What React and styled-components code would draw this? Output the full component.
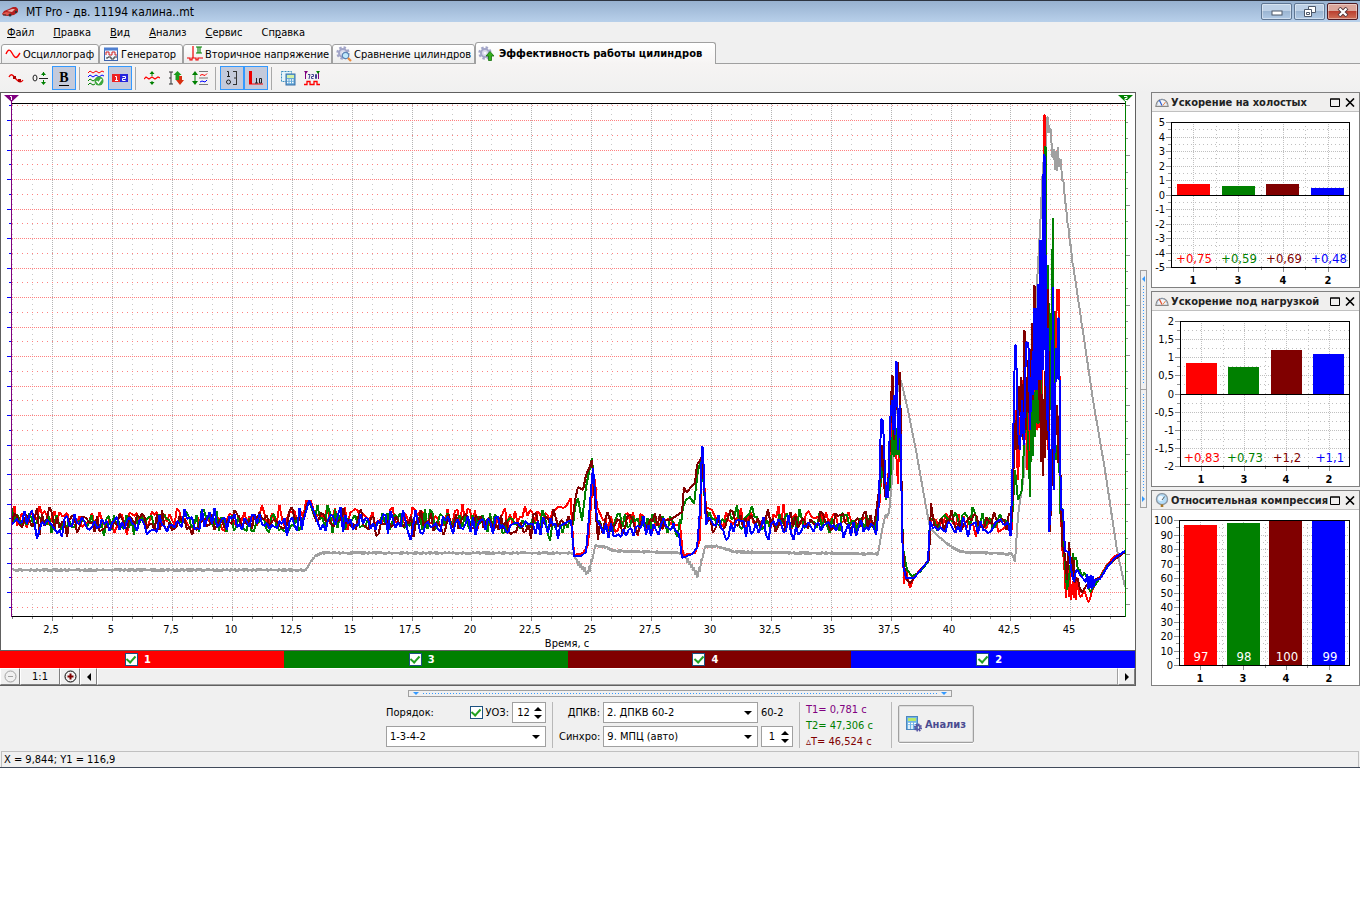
import React, { useState } from 'react';
import styled, { createGlobalStyle, css } from 'styled-components';

const GlobalStyle = createGlobalStyle`
  * {
    box-sizing: border-box;
  }
  body {
    margin: 0;
    background: #fff;
  }
  body, button, input, select {
    font-family: 'DejaVu Sans Condensed', 'DejaVu Sans', sans-serif;
    font-size: 11px;
    color: #000;
  }
`;

const RED = '#ff0000';
const GREEN = '#008000';
const MAROON = '#800000';
const BLUE = '#0000ff';
const GRAY = '#a0a0a0';

const Window = styled.div`
  background: #f0f0f0;
  border-top: 1px solid #2d3440;
  border-bottom: 1px solid #404a5a;
`;

const TitleBar = styled.header`
  display: flex;
  align-items: center;
  height: 21px;
  padding: 0 2px;
  background: linear-gradient(#97b1d0, #b8d0ea);

  h1 {
    flex: 1;
    margin: 0 0 0 8px;
    font-size: 12px;
    font-weight: 400;
  }
`;

const WindowButtons = styled.div`
  display: flex;
  gap: 2px;
`;

const WindowButton = styled.button`
  display: flex;
  align-items: center;
  justify-content: center;
  width: 31px;
  height: 17px;
  padding: 0;
  border: 1px solid ${(p) => (p.$close ? '#4e1a22' : '#5f7693')};
  border-radius: 2px;
  box-shadow: inset 0 0 0 1px rgba(255, 255, 255, 0.4);
  background: ${(p) =>
    p.$close
      ? 'linear-gradient(#dba79c 0 45%, #bb4030 50%, #cf7058)'
      : 'linear-gradient(#bdd0e6 0 45%, #9bb5d2 50%, #b1cae6)'};
`;

const MenuBar = styled.nav`
  display: flex;
  gap: 19px;
  align-items: center;
  height: 20px;
  padding: 0 7px;

  a {
    color: #000;
    text-decoration: none;
  }
`;

const Tabs = styled.div`
  display: flex;
  align-items: flex-end;
  height: 22px;
  padding-left: 1px;
  box-shadow: inset 0 -1px #a0a0a0;
`;

const Tab = styled.button`
  display: flex;
  align-items: center;
  gap: 2px;
  flex: 0 0 ${(p) => p.$width}px;
  height: 20px;
  padding: 0 3px;
  overflow: hidden;
  white-space: nowrap;
  border: 1px solid #a0a0a0;
  border-radius: 3px 3px 0 0;
  background: linear-gradient(#fff, #ececec);

  svg {
    flex-shrink: 0;
  }
  ${(p) =>
    p.$active &&
    css`
      height: 22px;
      gap: 5px;
      padding: 0 2px;
      font-weight: 700;
      border-bottom: 0;
      background: linear-gradient(#fff, #f6f4f3);
    `}
`;

const Toolbar = styled.div`
  display: flex;
  align-items: center;
  height: 28px;
  padding-left: 4px;
  background: linear-gradient(#f6f4f3, #f0f0f0);
`;

const ToolButton = styled.button`
  display: flex;
  align-items: center;
  justify-content: center;
  width: 24px;
  height: 24px;
  padding: 0;
  border: 1px solid ${(p) => (p.$on ? '#3399ff' : 'transparent')};
  background: ${(p) => (p.$on ? '#c4cadb' : 'none')};
`;

const ToolSeparator = styled.span`
  width: 1px;
  height: 23px;
  margin: 0 4px 0 3px;
  background: #a8a8a8;
`;

const Main = styled.main`
  display: grid;
  grid-template-columns: minmax(0, 1fr) 15px 209px;
`;

const Scope = styled.section`
  border: 1px solid #606060;
  border-width: 1px 1px 1px 0;
`;

const Plot = styled.svg`
  display: block;
  width: 100%;
  height: auto;
  background: #fff;
  border-left: ${(p) => (p.$edge ? '1px solid #606060' : '0')};
`;

const Channels = styled.div`
  display: flex;
  border-top: 1px solid #606060;
`;

const Channel = styled.label`
  display: flex;
  flex: 1;
  align-items: center;
  justify-content: center;
  gap: 6px;
  height: 17px;
  padding-right: 8px;
  color: #fff;
  font-weight: 700;
  background: ${(p) => p.$color};
`;

const CheckBox = styled.input.attrs({ type: 'checkbox' })`
  appearance: none;
  display: grid;
  place-items: center;
  width: 13px;
  height: 13px;
  margin: 0;
  border: 1px solid #1c5180;
  background: #fff;

  &:checked::after {
    content: '';
    width: 4px;
    height: 7px;
    margin-top: -2px;
    border: solid #21a121;
    border-width: 0 2px 2px 0;
    transform: rotate(42deg);
  }
`;

const ScrollRow = styled.div`
  display: flex;
  height: 17px;
  background: #f0f0f0;
`;

const FlatButton = styled.button`
  display: flex;
  align-items: center;
  justify-content: center;
  width: ${(p) => p.$width}px;
  padding: 0;
  border: 1px solid;
  border-color: #fff #808080 #808080 #fff;
  background: #f0f0f0;
`;

const Track = styled.div`
  flex: 1;
  border: 1px solid;
  border-color: #fff #a0a0a0 #a0a0a0 #fff;
`;

const VSplit = styled.div`
  display: flex;
  align-items: center;
  justify-content: center;
`;

const VGrip = styled.div`
  display: flex;
  flex-direction: column;
  align-items: center;
  width: 7px;
  height: 40%;
  padding: 5px 0;
  border: 1px solid #a0a0a0;

  span {
    flex: 1;
    width: 1px;
    margin: 4px 0;
    background: repeating-linear-gradient(#3399ff 0 1px, transparent 1px 3px);
  }
  i {
    width: 5px;
    height: 1px;
    background: #a0a0a0;
  }
`;

const HSplit = styled.div`
  display: flex;
  justify-content: center;
  padding: 4px 0;
`;

const HGrip = styled.div`
  display: flex;
  align-items: center;
  width: 40%;
  height: 7px;
  padding: 0 4px;
  border: 1px solid #a0a0a0;

  span {
    flex: 1;
    height: 1px;
    margin: 0 4px;
    background: repeating-linear-gradient(90deg, #3399ff 0 1px, transparent 1px 3px);
  }
`;

const Side = styled.aside`
  display: flex;
  flex-direction: column;
  gap: 3px;
`;

const Card = styled.section`
  border: 1px solid #808080;
  background: #fff;
`;

const CardHead = styled.div`
  display: flex;
  align-items: center;
  height: 19px;
  padding: 0 4px 0 3px;
  gap: 2px;
  background: #f0efee;
  border-bottom: 1px solid #c0c0c0;

  h2 {
    flex: 1;
    margin: 0;
    overflow: hidden;
    white-space: nowrap;
    font-size: 11px;
    font-weight: 700;
    color: #222;
  }
  button {
    display: flex;
    padding: 0;
    border: 0;
    background: none;
  }
  button + button {
    margin-left: 3px;
  }
`;

const Controls = styled.form`
  display: flex;
  justify-content: center;
  height: 49px;
  padding-top: 1px;
`;

const Group = styled.div`
  display: flex;
  flex-direction: column;
  gap: 3px;
  width: ${(p) => p.$width}px;
`;

const Row = styled.div`
  display: flex;
  align-items: center;
  gap: 3px;
  height: 21px;
  white-space: nowrap;
`;

const RowLabel = styled.label`
  flex: ${(p) => (p.$fixed ? '0 0 41px' : '1')};
  text-align: ${(p) => (p.$fixed ? 'right' : 'left')};
`;

const Divider = styled.span`
  width: 1px;
  height: 46px;
  margin: 0 6px;
  background: #b8b8b8;
`;

const SelectBox = styled.span`
  position: relative;
  flex: 0 0 ${(p) => p.$width}px;

  select {
    appearance: none;
    display: block;
    width: 100%;
    height: 21px;
    padding: 0 3px;
    border: 1px solid #a0a0a0;
    border-radius: 0;
    background: #fff;
  }
  svg {
    position: absolute;
    top: 9px;
    right: 6px;
    pointer-events: none;
  }
`;

const Spin = styled.span`
  display: flex;
  align-items: center;
  width: ${(p) => p.$width}px;
  height: 21px;
  padding-right: 3px;
  border: 1px solid #a0a0a0;
  background: #fff;

  input {
    flex: 1;
    min-width: 0;
    padding: 0;
    border: 0;
    text-align: center;
    outline: 0;
  }
  div {
    display: flex;
    flex-direction: column;
    gap: 4px;
  }
  button {
    display: flex;
    padding: 0;
    border: 0;
    background: none;
  }
`;

const Times = styled.div`
  display: flex;
  flex-direction: column;
  width: 79px;
  line-height: 16px;
  white-space: nowrap;
`;

const Time = styled.span`
  color: ${(p) => p.$color};
`;

const AnalyzeButton = styled.button`
  display: flex;
  align-items: center;
  justify-content: center;
  gap: 3px;
  width: 76px;
  height: 38px;
  margin-top: 3px;
  padding: 0;
  border: 1px solid #a0a0a0;
  border-radius: 2px;
  box-shadow: inset 0 0 0 1px #dcdcdc, 0 1px #fff;
  background: #f0f0f0;
  color: #4b4b91;
  font-weight: 700;
`;

const StatusBar = styled.footer`
  height: 16px;
  margin: 1px 1px 0;
  padding-left: 2px;
  line-height: 15px;
  border: 1px solid #c0c0c0;
  border-bottom: 0;
`;

/* ---------- icons ---------- */

const Icon = ({ children, size = 16 }) => (
  <svg width={size} height={size} viewBox="0 0 16 16" fill="none" aria-hidden="true">
    {children}
  </svg>
);

const Arrow = ({ dir, color = '#000', size = 4 }) => {
  const d = {
    up: [`0,${size} ${size * 2},${size} ${size},0`, size * 2, size],
    down: [`0,0 ${size * 2},0 ${size},${size}`, size * 2, size],
    left: [`${size},0 ${size},${size * 2} 0,${size}`, size, size * 2],
    right: [`0,0 0,${size * 2} ${size},${size}`, size, size * 2],
  }[dir];
  return (
    <svg width={d[1]} height={d[2]} aria-hidden="true">
      <polygon points={d[0]} fill={color} />
    </svg>
  );
};

const CarIcon = () => (
  <Icon>
    <path d="M0 10l2-3 5-2 4-2h3l2 2v3l-4 3-7 1-4-1z" fill="#b51f1f" />
    <path d="M5 7l5-2 3 0-3 3z" fill="#e9b4ae" />
    <path d="M0 10l4-2 5 1-3 2z" fill="#e05a4f" />
    <circle cx="8" cy="11" r="1.5" fill="#333" />
    <circle cx="14" cy="8" r="1.2" fill="#333" />
    <path d="M1 11h3" stroke="#333" />
  </Icon>
);

const WaveIcon = () => (
  <Icon>
    <path d="M1 8c2-5 4-5 6-1s4 6 6 3l2-3" stroke="#f00" strokeWidth="1.4" />
  </Icon>
);

const GeneratorIcon = () => (
  <Icon>
    <rect x="1.500" y="2.500" width="13" height="12" fill="#eef3fc" stroke="#3b62ad" />
    <path d="M1 3h14" stroke="#4f7fd0" strokeWidth="3" />
    <path d="M3 9V6h3v3h3V6h3v3h2" stroke="#d02020" />
    <path d="M3 12h2v-1h3v2h3v-2h3" stroke="#333" />
  </Icon>
);

const SecondaryIcon = () => (
  <Icon>
    <path d="M0 12h3v2h2v-2h1V0M6 12h3v2h2v-2h5" stroke="#e00" strokeWidth="1.2" />
    <path d="M9 1h6M9 7h6M11 1v6M13 1v6" stroke="#008000" strokeWidth="1.1" />
  </Icon>
);

const Gear = ({ cx = 7, cy = 7, r = 5, color = '#a2a5c8' }) => (
  <g>
    <circle cx={cx} cy={cy} r={r + 0.5} stroke={color} strokeWidth="2.4" strokeDasharray="2.4 1.9" />
    <circle cx={cx} cy={cy} r={r - 1} fill="#d9daec" stroke={color} strokeWidth="2" />
    <circle cx={cx} cy={cy} r="1.3" fill="#f8f8fc" />
  </g>
);

const CompareIcon = () => (
  <Icon>
    <Gear />
    <circle cx="9.500" cy="9.500" r="3.2" fill="#bfe8fb" stroke="#5d84b5" strokeWidth="1.2" />
    <path d="M12 12l3 3" stroke="#ea8a3c" strokeWidth="2.2" />
  </Icon>
);

const EfficiencyIcon = () => (
  <Icon>
    <Gear />
    <path d="M12 5.500l4 4.500h-2.500v4.500h-3V10H8z" fill="#36b01f" stroke="#14700c" strokeWidth=".8" />
  </Icon>
);

const BrokenWaveIcon = () => (
  <Icon>
    <path d="M1 7c2-4 4-2 6 1l2 2c2 2 4 3 6 0" stroke="#e00" strokeWidth="1.3" />
    <path d="M5 6h3v3H5zM10 9h3v3h-3z" fill="#b00000" />
  </Icon>
);

const ZeroIcon = () => (
  <Icon>
    <ellipse cx="3" cy="8" rx="2" ry="3" stroke="#222" />
    <path d="M7 8.500h9" stroke="#222" />
    <path d="M11.500 2v4M11.500 10v4" stroke="#008000" />
    <path d="M9 5l2.500-3L14 5zM9 12l2.500 3 2.500-3z" fill="#008000" />
  </Icon>
);

const BoldB = styled.span`
  font: 900 14px/14px 'Liberation Serif', serif;
  border-bottom: 1px solid #000;
`;

const WavesOkIcon = () => (
  <Icon>
    <path d="M0 3l2-2 3 2 3-2 3 2 3-2 2 1" stroke="#f00" />
    <path d="M0 7l2-2 3 2 3-2 3 2 3-2 2 1" stroke="#00f" />
    <path d="M0 11l2-2 3 2 3-2M0 15l2-2 3 2 2-1" stroke="#008000" />
    <circle cx="11" cy="11" r="4.500" fill="#3da83d" />
    <path d="M8.500 11l2 2 3-4" stroke="#fff" strokeWidth="1.5" />
  </Icon>
);

const OneTwoIcon = () => (
  <Icon>
    <path d="M0 4h8v8H0z" fill="#e22" />
    <path d="M8 4h8v8H8z" fill="#22d" />
    <path d="M3 6.500h1.500V10M3 10.500h3M10.500 6.500h3v2h-3v2h3" stroke="#fff" />
  </Icon>
);

const StretchIcon = () => (
  <Icon>
    <path d="M0 9l2-2 3 2 3-2 3 2 3-2 2 1" stroke="#f00" strokeWidth="1.2" />
    <path d="M8 2v4M8 11v3" stroke="#008000" />
    <path d="M5.500 4L8 1l2.500 3zM5.500 12L8 15l2.500-3z" fill="#008000" />
  </Icon>
);

const UpDownIcon = () => (
  <Icon>
    <path d="M1 2h4M1 14h4M3 2v12M1 8h2" stroke="#333" />
    <path d="M8.500 1l4 4h-2v5h-4V5h-2z" transform="translate(1 0)" fill="#1b9b1b" />
    <path d="M12 15l4-5h-2V6h-3v4H8z" fill="#d83010" />
  </Icon>
);

const FitIcon = () => (
  <Icon>
    <path d="M3 3v10" stroke="#008000" />
    <path d="M0 5l3-4 3 4zM0 11l3 4 3-4z" fill="#008000" />
    <path d="M7 1.500h9M7 8h9M7 14.500h9" stroke="#777" />
    <path d="M8 5.500l2-1 3 1 2-2" stroke="#f00" />
    <path d="M8 12l2-1 3 1 2-2" stroke="#00f" />
  </Icon>
);

const ScaleIcon = () => (
  <Icon>
    <path d="M3 1.500h1.500V6M3 6.500h3" stroke="#222" />
    <circle cx="4.500" cy="12" r="2" stroke="#222" />
    <path d="M9 1.500h4M10 8h2M9 14.500h4M12.500 1v13" stroke="#333" />
  </Icon>
);

const TenIcon = () => (
  <Icon>
    <path d="M1 14h14" stroke="#f00" />
    <path d="M1 1h3v13H1z" fill="#e00" />
    <path d="M8.500 8v5M7 13h3M11.500 8.500h2V13h-2z" stroke="#222" />
  </Icon>
);

const CalcIcon = () => (
  <Icon>
    <path d="M1.500 1.500h10v10h-10z" stroke="#3a8fc0" strokeDasharray="2 1" fill="#e4f4fb" />
    <rect x="6" y="4" width="9" height="11" fill="#66a9d8" stroke="#3a70a8" />
    <rect x="7" y="5" width="7" height="3" fill="#d2f0a8" />
    <path d="M7 10h7M7 12.500h7" stroke="#fff" strokeDasharray="1.500 1" strokeWidth="1.500" />
  </Icon>
);

const Icon720 = () => (
  <Icon>
    <path d="M1.500 1v8M14.500 1v8" stroke="#800080" />
    <path d="M0 1h4L2 4z" fill="#800080" />
    <path d="M12 1h4l-2 3z" fill="#008000" />
    <path d="M4 4.500h2L5 9M7.500 4.500h2v2h-2v2h2M11.500 4.500h1v4h-1z" stroke="#404090" />
    <path d="M0 14.500h3v-3h3v3h4v-3h3v3h3" stroke="#f00" strokeWidth="1.300" />
  </Icon>
);

const GaugeIcon = ({ needle }) => (
  <Icon size={14}>
    <path d="M1 13a7 8 0 0 1 14 0z" fill="#f5f6f8" stroke="#888" strokeWidth="1.400" />
    <path d="M3 11a5 6 0 0 1 10 0" stroke="#90b0dd" strokeDasharray="1.500 1.500" />
    <path d="M8 12L5 6" stroke={needle} strokeWidth="1.500" />
    <path d="M9 12l3-4" stroke="#e07030" />
  </Icon>
);

const CompressionIcon = () => (
  <Icon size={14}>
    <circle cx="8" cy="7" r="6.300" fill="#b5ddf8" stroke="#8d99a5" strokeWidth="1.500" />
    <circle cx="6.500" cy="6" r="3" fill="#eef8ff" />
    <path d="M8 8l3-4" stroke="#444" />
    <path d="M8 13v3" stroke="#a87828" strokeWidth="3" />
  </Icon>
);

const AnalyzeIcon = () => (
  <Icon>
    <rect x=".5" y=".5" width="11" height="13" fill="#71b5e6" stroke="#4c86bd" />
    <rect x="2" y="2" width="8" height="3" fill="#b9e86a" />
    <path d="M2 7.500h8M2 10h8M2 12h6" stroke="#fff" strokeDasharray="2 1" strokeWidth="1.300" />
    <circle cx="12" cy="11.500" r="3" stroke="#5757a5" strokeWidth="2.200" strokeDasharray="1.500 .8" />
    <circle cx="12" cy="11.500" r="2" stroke="#5757a5" strokeWidth="1.500" />
  </Icon>
);

/* ---------- main chart ---------- */

// Keyframes are [x, y, spread, step]; a spread fills the gap up to the next
// keyframe with jitter around the straight line. A step of 1 swings from side
// to side, which draws a solid band.
const buildTrace = (keys, seed) => {
  let s = seed;
  const rnd = () => {
    s = (s * 16807) % 2147483647;
    return s / 2147483647;
  };
  const pts = [];
  keys.forEach(([x, y, spread = 0, step = 2.5], i) => {
    pts.push([x, y]);
    const next = keys[i + 1];
    if (!spread || !next) return;
    let side = 1;
    for (let px = x + step; px < next[0]; px += step) {
      const base = y + ((next[1] - y) * (px - x)) / (next[0] - x);
      side = -side;
      const r = rnd();
      const roll = rnd();
      if (step === 1) {
        pts.push([px, Math.round(base + side * spread * (0.5 + r * 0.5))]);
      } else {
        pts.push([px, Math.round(base + (r * 2 - 1) * spread * (roll > 0.8 ? 1.7 : 1))]);
      }
    }
  });
  return pts.map((p) => p.join(',')).join(' ');
};

const traces = [
  {
    color: GRAY,
    seed: 77,
    keys: [
      [12, 570, 2, 1], [306, 570], [310, 563, 1, 1], [315, 556, 1, 1], [322, 553, 2, 1],
      [573, 553], [576, 560, 4, 1], [588, 574, 6, 1], [592, 562], [595, 546, 1, 1],
      [606, 547, 1, 1], [614, 551, 2, 1], [683, 553, 4, 1], [698, 576, 6, 1],
      [702, 560], [705, 547, 1, 1], [716, 546, 1, 1], [735, 552, 2, 1], [878, 554],
      [882, 530], [885, 517, 3, 1], [889, 514], [892, 480], [895, 420], [899, 375],
      [902, 385], [908, 410], [916, 450], [923, 490], [930, 528], [940, 538, 1, 1],
      [950, 546, 1, 1], [962, 552, 2, 1], [1012, 554], [1015, 562], [1018, 515],
      [1024, 475], [1030, 400], [1036, 300], [1040, 230], [1043, 165], [1046, 148],
      [1047, 118, 8, 1], [1050, 130, 12, 1], [1053, 158, 13, 1], [1060, 160, 10, 1],
      [1063, 180, 6, 1], [1068, 225, 6, 1], [1073, 265, 3, 1], [1082, 325], [1093, 400],
      [1105, 470], [1117, 550], [1125, 587],
    ],
  },
  {
    color: RED,
    seed: 4211,
    keys: [
      [12, 520, 9], [303, 520], [306, 501], [311, 501], [315, 515, 9], [548, 517, 5],
      [571, 506], [574, 555], [583, 553], [588, 545], [593, 478], [595, 480],
      [597, 507], [603, 520, 9], [675, 525], [680, 525], [683, 555], [695, 553],
      [700, 540], [702, 457], [706, 507], [712, 510], [716, 519, 9], [876, 520],
      [880, 500], [882, 450], [885, 495], [888, 480], [891, 440], [893, 395],
      [896, 450], [898, 484], [900, 400], [902, 520], [904, 584], [906, 570],
      [910, 588], [914, 577], [920, 570], [928, 562], [931, 520, 8], [1012, 528],
      [1015, 410], [1018, 480], [1022, 380], [1025, 440, 40, 1], [1032, 430],
      [1035, 400, 45, 1], [1041, 380], [1042, 440], [1044, 115], [1045, 116],
      [1047, 360], [1048, 450], [1051, 330], [1054, 420], [1057, 290], [1059, 290],
      [1060, 460], [1062, 548], [1064, 560], [1066, 598], [1067, 572, 20, 1],
      [1072, 590, 14, 1], [1078, 588, 9, 2], [1089, 602], [1093, 588], [1099, 579],
      [1106, 566], [1115, 556], [1125, 552],
    ],
  },
  {
    color: GREEN,
    seed: 9103,
    keys: [
      [12, 508], [14, 522, 9], [302, 524], [306, 508], [310, 503], [315, 518, 10],
      [573, 525], [575, 508], [578, 498], [582, 521], [586, 487], [589, 472],
      [592, 458], [594, 485], [597, 520], [600, 522, 10], [681, 524], [683, 507],
      [686, 500], [690, 497], [694, 504], [698, 470], [702, 458], [704, 490],
      [707, 522, 10], [876, 522], [880, 490], [882, 465], [886, 500], [890, 486],
      [892, 445, 18, 1], [900, 445], [901, 470], [903, 548],
      [907, 570], [912, 576], [920, 572], [928, 562], [930, 520, 8], [1012, 520],
      [1015, 470], [1018, 500], [1022, 490], [1026, 400], [1029, 460], [1030, 497],
      [1031, 430, 45, 1], [1036, 410, 50, 1], [1041, 370, 35, 1], [1045, 146],
      [1046, 148], [1047, 380], [1048, 265], [1050, 410], [1053, 218], [1054, 400],
      [1056, 460], [1058, 440, 35, 1], [1061, 500], [1064, 550], [1067, 590],
      [1070, 570, 12, 1], [1074, 560, 6, 2], [1086, 575], [1090, 592], [1098, 581],
      [1108, 565], [1125, 551],
    ],
  },
  {
    color: MAROON,
    seed: 613,
    keys: [
      [12, 522, 9], [303, 522], [307, 504], [311, 504], [316, 521, 9], [572, 524],
      [575, 500], [578, 487], [583, 490], [586, 475], [590, 466], [592, 460],
      [594, 490], [598, 540], [600, 522, 9], [670, 520], [682, 512], [684, 487],
      [687, 493], [690, 488], [695, 483], [697, 465], [702, 457], [705, 500],
      [708, 521, 9], [875, 520], [879, 490], [882, 445], [885, 497], [888, 490],
      [890, 440], [892, 375], [893, 377], [894, 440], [897, 380, 20, 1], [900, 372],
      [901, 440], [902, 520], [904, 565], [907, 580], [910, 583], [915, 577],
      [922, 568], [929, 560], [931, 503], [934, 525, 8], [1012, 518], [1015, 420],
      [1016, 450, 30, 1], [1021, 377], [1023, 440], [1024, 330], [1025, 332],
      [1026, 430], [1028, 360], [1030, 430], [1032, 323], [1033, 400], [1034, 285],
      [1035, 287], [1036, 380], [1038, 310], [1039, 400, 50, 1], [1045, 458],
      [1046, 288], [1047, 440], [1048, 289], [1050, 532], [1053, 440], [1055, 410],
      [1056, 430, 35, 1], [1060, 450], [1062, 545], [1065, 555], [1067, 580],
      [1069, 542], [1071, 565, 14, 1], [1076, 578, 10, 2], [1082, 592], [1087, 585],
      [1094, 580], [1101, 577], [1110, 563], [1125, 552],
    ],
  },
  {
    color: BLUE,
    seed: 52001,
    keys: [
      [12, 524, 9], [303, 522], [307, 508], [309, 500], [314, 512], [318, 523, 10],
      [560, 526], [571, 520], [574, 556], [581, 556], [586, 552], [588, 530],
      [591, 490], [593, 468], [595, 492], [597, 520], [601, 527, 9], [675, 530],
      [679, 534], [682, 558], [692, 554], [697, 548], [700, 510], [702, 446],
      [703, 448], [704, 480], [706, 525, 9], [877, 528], [879, 500], [881, 419],
      [883, 421], [886, 497], [888, 497], [890, 422], [892, 400], [893, 430],
      [894, 395], [895, 435], [896, 361], [897, 363], [898, 450], [900, 405],
      [901, 460], [902, 520], [903, 565], [906, 578], [914, 578], [920, 571],
      [928, 561], [930, 521], [933, 528, 8], [1011, 526], [1013, 450], [1015, 345],
      [1016, 346], [1018, 430], [1020, 450], [1022, 400], [1024, 445], [1026, 342],
      [1028, 343], [1029, 352], [1030, 430], [1032, 360], [1033, 395], [1034, 308],
      [1035, 390], [1036, 308], [1037, 390], [1038, 284], [1039, 380], [1040, 240],
      [1041, 380], [1042, 240], [1043, 370], [1043, 194], [1044, 154], [1044, 350],
      [1045, 156], [1046, 350], [1047, 420], [1048, 328], [1049, 532], [1051, 505],
      [1053, 287], [1054, 490], [1055, 420, 45, 1], [1058, 318], [1059, 319],
      [1060, 440], [1061, 510], [1063, 510], [1065, 551], [1069, 552],
      [1072, 575, 8, 2], [1080, 575], [1086, 582, 8, 1], [1095, 580],
      [1100, 579], [1108, 566], [1116, 557], [1125, 551],
    ],
  },
];

const timeLabels = [
  '2,5', '5', '7,5', '10', '12,5', '15', '17,5', '20', '22,5',
  '25', '27,5', '30', '32,5', '35', '37,5', '40', '42,5', '45',
];

const range = (n) => Array.from({ length: n }, (_, i) => i);

const ScopeChart = () => (
  <Plot viewBox="1 93 1134 557" $edge role="img" aria-label="Эффективность работы цилиндров">
    <g shapeRendering="crispEdges">
      {range(56).map((i) => {
        const x = Math.round(12.4 + i * 19.96) + 0.5;
        const major = i % 3 === 2;
        return (
          <g key={i}>
            <line x1={x} y1="104" x2={x} y2="616" stroke={major ? '#b4b4b4' : '#c8c8c8'} strokeDasharray={major ? '1 1' : '1 4'} />
            <line x1={x} y1="617" x2={x} y2={major ? 621 : 619} stroke="#808080" />
          </g>
        );
      })}
      {range(35).map((i) => {
        const y = Math.round(105.4 + i * 14.75) + 0.5;
        const major = i % 2 === 1;
        return (
          <g key={i}>
            <line x1="12" y1={y} x2="1125" y2={y} stroke="#ff8080" strokeDasharray={major ? '1 1' : '1 4'} />
            <line x1={major ? 7 : 9} y1={y} x2="11" y2={y} stroke={BLUE} />
          </g>
        );
      })}
      {range(31).map((i) => {
        const y = Math.round(105 + i * 16.64) + 0.5;
        return <line key={i} x1="1126" y1={y} x2={i % 3 ? 1128 : 1130} y2={y} stroke="#909090" />;
      })}
      <path d="M11 103.500H1125M11 616.500H1126" stroke="#000" />
      {traces.map((t) => (
        <polyline
          key={t.color}
          points={buildTrace(t.keys, t.seed)}
          fill="none"
          stroke={t.color}
          strokeWidth="2"
          strokeLinejoin="bevel"
        />
      ))}
      <path d="M11.500 97V617" stroke="#800080" />
      <path d="M1125.500 97V617" stroke={GREEN} />
    </g>
    <path d="M4 95h15l-7.500 7z" fill="#800080" />
    <path d="M10 96.500h1.500V100" stroke="#fff" fill="none" />
    <path d="M1118 95h15l-7.500 7z" fill={GREEN} />
    <path d="M1124 96.500h3v2h-2v2h2" stroke="#fff" fill="none" />
    <g fontSize="11" textAnchor="middle">
      {timeLabels.map((t, i) => (
        <text key={t} x={Math.round(51 + i * 59.88)} y="633">{t}</text>
      ))}
      <text x="567" y="647">Время, с</text>
    </g>
  </Plot>
);

/* ---------- side charts ---------- */

const BarChart = ({ title, left, min, max, labels, minor, values, texts, barWidth, textColors }) => {
  const top = 10;
  const height = 145;
  const right = 198;
  const slot = (right - left) / 4;
  const toY = (v) => Math.round(top + ((max - v) / (max - min)) * height);
  const rows = (labels.length - 1) * minor;
  return (
    <Plot viewBox="0 0 207 175" role="img" aria-label={title}>
      <g shapeRendering="crispEdges">
        {range(rows + 1).map((i) => {
          const y = Math.round(top + (i * height) / rows) + 0.5;
          const major = i % minor === 0;
          return (
            <g key={i}>
              <line x1={left} y1={y} x2={right} y2={y} stroke="#c0c0c0" strokeDasharray={major ? '1 1' : '1 3'} />
              <line x1={left - (major ? 5 : 3)} y1={y} x2={left} y2={y} stroke="#909090" />
            </g>
          );
        })}
        {range(7).map((i) => {
          const x = Math.round(left + ((i + 1) * slot) / 2) + 0.5;
          return (
            <g key={i}>
              <line x1={x} y1={top} x2={x} y2={top + height} stroke="#c0c0c0" strokeDasharray={i % 2 ? '1 3' : '1 1'} />
              <line x1={x} y1={top + height} x2={x} y2={top + height + (i % 2 ? 3 : 5)} stroke="#909090" />
            </g>
          );
        })}
        {values.map((v, i) => (
          <rect
            key={i}
            x={Math.round(left + slot * (i + 0.5) - barWidth / 2)}
            y={toY(v)}
            width={barWidth}
            height={toY(0) - toY(v)}
            fill={[RED, GREEN, MAROON, BLUE][i]}
          />
        ))}
        <rect x={left + 0.5} y={top + 0.5} width={right - left - 1} height={height} fill="none" stroke="#000" />
        <line x1={left} y1={toY(0) + 0.5} x2={right} y2={toY(0) + 0.5} stroke="#000" />
      </g>
      <g fontSize="11" textAnchor="end">
        {labels.map((t, i) => (
          <text key={t} x={left - 6} y={Math.round(top + (i * height) / (labels.length - 1)) + 4}>{t}</text>
        ))}
      </g>
      <g textAnchor="middle">
        {texts.map((t, i) => (
          <text key={i} x={Math.round(left + slot * (i + 0.5)) + 1} y="151" fontSize="13" fill={textColors[i]}>{t}</text>
        ))}
        {['1', '3', '4', '2'].map((t, i) => (
          <text key={t} x={Math.round(left + slot * (i + 0.5))} y="172" fontSize="11" fontWeight="700">{t}</text>
        ))}
      </g>
    </Plot>
  );
};

const colors = [RED, GREEN, MAROON, BLUE];

const cards = [
  {
    title: 'Ускорение на холостых',
    icon: <GaugeIcon needle="#3060d0" />,
    left: 19,
    min: -5,
    max: 5,
    labels: ['5', '4', '3', '2', '1', '0', '-1', '-2', '-3', '-4', '-5'],
    minor: 2,
    values: [0.75, 0.59, 0.69, 0.48],
    texts: ['+0,75', '+0,59', '+0,69', '+0,48'],
    textColors: colors,
    barWidth: 33,
  },
  {
    title: 'Ускорение под нагрузкой',
    icon: <GaugeIcon needle="#e05030" />,
    left: 28,
    min: -2,
    max: 2,
    labels: ['2', '1,5', '1', '0,5', '0', '-0,5', '-1', '-1,5', '-2'],
    minor: 2,
    values: [0.83, 0.73, 1.2, 1.1],
    texts: ['+0,83', '+0,73', '+1,2', '+1,1'],
    textColors: colors,
    barWidth: 31,
  },
  {
    title: 'Относительная компрессия',
    icon: <CompressionIcon />,
    left: 27,
    min: 0,
    max: 100,
    labels: ['100', '90', '80', '70', '60', '50', '40', '30', '20', '10', '0'],
    minor: 2,
    values: [96.7, 98, 100, 99.7],
    texts: ['97', '98', '100', '99'],
    textColors: ['#fff', '#fff', '#fff', '#fff'],
    barWidth: 33,
  },
];

const SideCard = ({ icon, ...chart }) => (
  <Card>
    <CardHead>
      {icon}
      <h2>{chart.title}</h2>
      <button type="button" aria-label="Развернуть">
        <svg width="10" height="9"><path d="M.5 1h9v7.500h-9zM0 1h10" fill="none" stroke="#000" /></svg>
      </button>
      <button type="button" aria-label="Закрыть">
        <svg width="10" height="9"><path d="M1 .5l8 8M9 .5l-8 8" stroke="#000" strokeWidth="1.600" /></svg>
      </button>
    </CardHead>
    <BarChart {...chart} />
  </Card>
);

/* ---------- shell ---------- */

const tabs = [
  { name: 'Осциллограф', width: 98, icon: <WaveIcon /> },
  { name: 'Генератор', width: 84, icon: <GeneratorIcon /> },
  { name: 'Вторичное напряжение', width: 149, icon: <SecondaryIcon /> },
  { name: 'Сравнение цилиндров', width: 143, icon: <CompareIcon /> },
  { name: 'Эффективность работы цилиндров', width: 241, icon: <EfficiencyIcon /> },
];

const tools = [
  [[<BrokenWaveIcon />, 'Сигнал'], [<ZeroIcon />, 'Ноль'], [<BoldB>B</BoldB>, 'Толщина', true]],
  [[<WavesOkIcon />, 'Каналы'], [<OneTwoIcon />, 'Номера', true]],
  [[<StretchIcon />, 'Растянуть'], [<UpDownIcon />, 'Сдвиг'], [<FitIcon />, 'Вписать']],
  [[<ScaleIcon />, 'Шкала', true], [<TenIcon />, 'Деления', true]],
  [[<CalcIcon />, 'Расчёт'], [<Icon720 />, 'Цикл']],
];

const Combo = ({ id, width, value }) => (
  <SelectBox $width={width}>
    <select id={id} defaultValue={value}>
      <option>{value}</option>
    </select>
    <Arrow dir="down" />
  </SelectBox>
);

const SpinBox = ({ label, width, initial }) => {
  const [value, setValue] = useState(initial);
  return (
    <Spin $width={width}>
      <input aria-label={label} value={value} onChange={(e) => setValue(Number(e.target.value) || 0)} />
      <div>
        <button type="button" aria-label="Больше" onClick={() => setValue(value + 1)}>
          <Arrow dir="up" />
        </button>
        <button type="button" aria-label="Меньше" onClick={() => setValue(value - 1)}>
          <Arrow dir="down" />
        </button>
      </div>
    </Spin>
  );
};

const App = () => (
  <>
    <GlobalStyle />
    <Window>
      <TitleBar>
        <CarIcon />
        <h1>MT Pro - дв. 11194 калина..mt</h1>
        <WindowButtons>
          <WindowButton aria-label="Свернуть">
            <svg width="12" height="8"><rect x="1" y="3" width="10" height="4" fill="#fff" stroke="#4d586a" /></svg>
          </WindowButton>
          <WindowButton aria-label="Восстановить">
            <svg width="12" height="11" fill="#fff" stroke="#4d586a">
              <path d="M4.500 .5h7v6h-7z" />
              <path d="M.5 3.500h7v7h-7zM2.500 6.500h3v2h-3z" />
            </svg>
          </WindowButton>
          <WindowButton $close aria-label="Закрыть">
            <svg width="12" height="10">
              <path d="M2 1l8 8M10 1L2 9" stroke="#54383c" strokeWidth="4" />
              <path d="M2.500 1.500l7 7M9.500 1.500l-7 7" stroke="#fff" strokeWidth="2.200" />
            </svg>
          </WindowButton>
        </WindowButtons>
      </TitleBar>

      <MenuBar>
        <a href="#file"><u>Ф</u>айл</a>
        <a href="#edit"><u>П</u>равка</a>
        <a href="#view"><u>В</u>ид</a>
        <a href="#analysis"><u>А</u>нализ</a>
        <a href="#service"><u>С</u>ервис</a>
        <a href="#help">Сп<u>р</u>авка</a>
      </MenuBar>

      <Tabs role="tablist">
        {tabs.map((t, i) => (
          <Tab key={t.name} role="tab" aria-selected={i === 4} $active={i === 4} $width={t.width}>
            {t.icon}
            {t.name}
          </Tab>
        ))}
      </Tabs>

      <Toolbar>
        {tools.map((group, g) => (
          <React.Fragment key={g}>
            {g > 0 && <ToolSeparator />}
            {group.map(([icon, name, on]) => (
              <ToolButton key={name} aria-label={name} $on={on}>{icon}</ToolButton>
            ))}
          </React.Fragment>
        ))}
      </Toolbar>

      <Main>
        <Scope>
          <ScopeChart />
          <Channels>
            {['1', '3', '4', '2'].map((n, i) => (
              <Channel key={n} $color={colors[i]}>
                <CheckBox defaultChecked />
                {n}
              </Channel>
            ))}
          </Channels>
          <ScrollRow>
            <FlatButton $width={20} aria-label="Уменьшить">
              <svg width="13" height="13" fill="none" stroke="#a0a0a0"><circle cx="6.500" cy="6.500" r="5.500" /><path d="M4 6.500h5" /></svg>
            </FlatButton>
            <FlatButton $width={40}>1:1</FlatButton>
            <FlatButton $width={20} aria-label="Увеличить">
              <svg width="13" height="13" fill="none">
                <circle cx="6.500" cy="6.500" r="5.500" stroke="#000" />
                <path d="M3.500 6.500h6M6.500 3.500v6" stroke="#800000" strokeWidth="2" />
              </svg>
            </FlatButton>
            <FlatButton $width={17} aria-label="Влево"><Arrow dir="left" /></FlatButton>
            <Track />
            <FlatButton $width={17} aria-label="Вправо"><Arrow dir="right" /></FlatButton>
          </ScrollRow>
        </Scope>

        <VSplit>
          <VGrip>
            <Arrow dir="left" color="#3399ff" size={3} />
            <span />
            <i />
            <span />
            <Arrow dir="right" color="#3399ff" size={3} />
          </VGrip>
        </VSplit>

        <Side>
          {cards.map((c) => (
            <SideCard key={c.title} {...c} />
          ))}
        </Side>
      </Main>

      <HSplit>
        <HGrip>
          <Arrow dir="down" color="#3399ff" size={3} />
          <span />
          <Arrow dir="down" color="#3399ff" size={3} />
        </HGrip>
      </HSplit>

      <Controls onSubmit={(e) => e.preventDefault()}>
        <Group $width={160}>
          <Row>
            <RowLabel htmlFor="order">Порядок:</RowLabel>
            <CheckBox id="uoz" defaultChecked />
            <label htmlFor="uoz">УОЗ:</label>
            <SpinBox label="УОЗ" width={34} initial={12} />
          </Row>
          <Row>
            <Combo id="order" width={160} value="1-3-4-2" />
          </Row>
        </Group>
        <Divider />
        <Group $width={234}>
          <Row>
            <RowLabel $fixed htmlFor="dpkv">ДПКВ:</RowLabel>
            <Combo id="dpkv" width={155} value="2. ДПКВ 60-2" />
            60-2
          </Row>
          <Row>
            <RowLabel $fixed htmlFor="sync">Синхро:</RowLabel>
            <Combo id="sync" width={155} value="9. МПЦ (авто)" />
            <SpinBox label="Номер" width={32} initial={1} />
          </Row>
        </Group>
        <Divider />
        <Times>
          <Time $color="#800080">T1= 0,781 с</Time>
          <Time $color={GREEN}>T2= 47,306 с</Time>
          <Time $color={MAROON}>▵T= 46,524 с</Time>
        </Times>
        <Divider />
        <AnalyzeButton type="submit">
          <AnalyzeIcon />
          Анализ
        </AnalyzeButton>
      </Controls>

      <StatusBar>X = 9,844; Y1 = 116,9</StatusBar>
    </Window>
  </>
);

export default App;
